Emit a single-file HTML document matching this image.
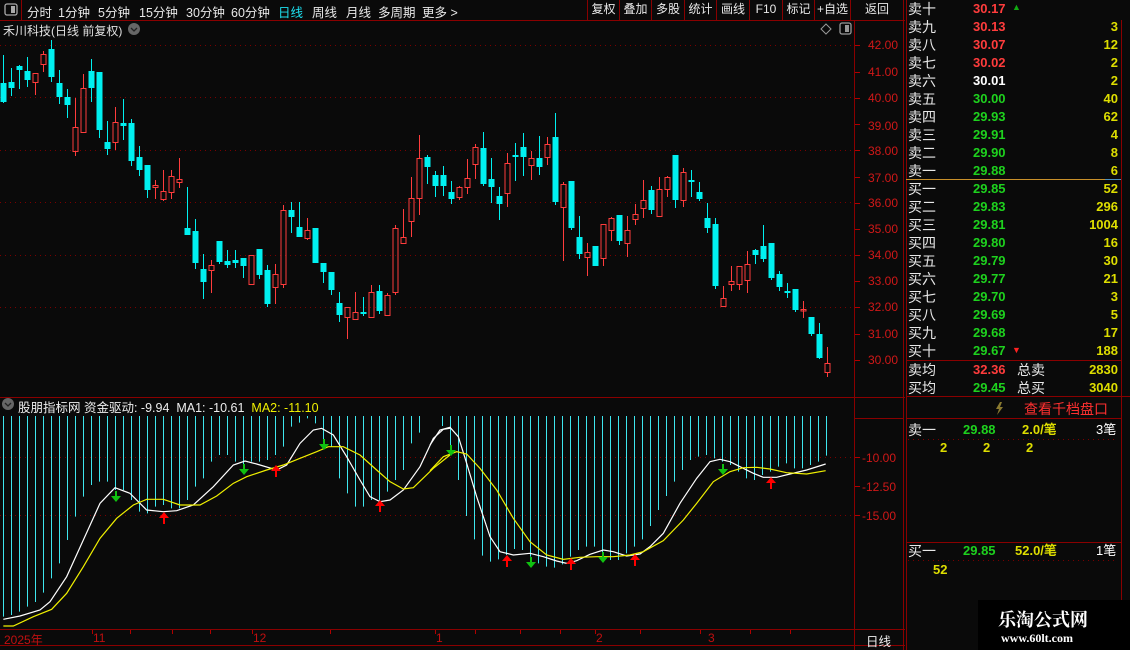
<!DOCTYPE html>
<html><head><meta charset="utf-8"><style>
*{margin:0;padding:0;box-sizing:border-box}
body{width:1130px;height:650px;background:#0a0a0a;overflow:hidden;position:relative;font-family:"Liberation Sans","Noto Sans CJK SC",sans-serif;color:#ddd}
.a{position:absolute;white-space:nowrap}
.tb{font-size:12.5px;top:2px;color:#e8e8e8}
.btn{position:absolute;top:0;height:20px;border-left:1px solid #800;font-size:12px;color:#e8e8e8;text-align:center;line-height:19px;white-space:nowrap;overflow:hidden}
.r{font-size:14px;line-height:18px}
.lab{left:908px;color:#e8e8e8}
.pr{left:973px;font-weight:bold;font-size:13px}
.nm{right:12px;font-weight:bold;font-size:13px;color:#dede00;text-align:right}
.red{color:#ff3c3c}.grn{color:#1ed21e}.yel{color:#dede00}.wht{color:#fff}
.ax{left:868px;font-size:12px;color:#d01818}
</style></head><body>
<svg id="sv" class="a" style="left:0;top:0" width="1130" height="650">
<g stroke="#8a0000" fill="none">
<line x1="0" y1="20.5" x2="905" y2="20.5"/>
<line x1="854.5" y1="20" x2="854.5" y2="650"/>
<line x1="903.5" y1="0" x2="903.5" y2="650"/>
<line x1="906.5" y1="0" x2="906.5" y2="650"/>
<line x1="1121.5" y1="20" x2="1121.5" y2="650"/>
<line x1="0" y1="397.5" x2="905" y2="397.5"/>
<line x1="0" y1="629.5" x2="905" y2="629.5"/>
<line x1="0" y1="645.5" x2="905" y2="645.5"/>
<line x1="21.5" y1="0" x2="21.5" y2="20"/>
<line x1="906" y1="360.5" x2="1121" y2="360.5"/>
<line x1="906" y1="396.5" x2="1130" y2="396.5"/>
<line x1="906" y1="418.5" x2="1121" y2="418.5"/>
<line x1="906" y1="542.5" x2="1121" y2="542.5"/>
<line x1="855" y1="418.5" x2="903" y2="418.5"/>
</g>
<line x1="906" y1="179.5" x2="1121" y2="179.5" stroke="#c8902a"/>
<line x1="1105" y1="179.5" x2="1121" y2="179.5" stroke="#4a90c0"/>
<g stroke="#7a0000" stroke-dasharray="1,4">
<line x1="0" y1="45.5" x2="854" y2="45.5"/><line x1="0" y1="97.5" x2="854" y2="97.5"/>
<line x1="0" y1="150.5" x2="854" y2="150.5"/><line x1="0" y1="202.5" x2="854" y2="202.5"/>
<line x1="0" y1="255.5" x2="854" y2="255.5"/><line x1="0" y1="307.5" x2="854" y2="307.5"/>
<line x1="0" y1="457.5" x2="854" y2="457.5"/><line x1="0" y1="515.5" x2="854" y2="515.5"/>
<line x1="908" y1="439.5" x2="1118" y2="439.5"/><line x1="908" y1="560.5" x2="1118" y2="560.5"/>
</g>
<g id="cd"></g><g id="bars" stroke="#3ee6ee" stroke-width="1"></g>
<g id="ticks" stroke="#b00000"></g>
<polyline id="wl" fill="none" stroke="#fff" stroke-width="1.2"/>
<polyline id="yl" fill="none" stroke="#f0f000" stroke-width="1.2"/>
<polyline id="wl2" fill="none" stroke="#fff" stroke-width="1.2"/>
<polyline id="yl2" fill="none" stroke="#f0f000" stroke-width="1.2"/>
<g id="arr"></g>
<rect x="5" y="4" width="12" height="11" rx="2" fill="none" stroke="#aaa" stroke-width="1.3"/><rect x="11" y="6" width="4" height="7" fill="#aaa"/>
<rect x="840" y="23" width="11" height="11" rx="2" fill="none" stroke="#999" stroke-width="1.3"/><rect x="845" y="25" width="4" height="7" fill="#999"/>
<path d="M826 24 L831 29 L826 34 L821 29Z" fill="none" stroke="#999"/>
<circle cx="134" cy="29" r="6" fill="#666"/><path d="M131 28 l3 3 l3 -3" stroke="#222" fill="none" stroke-width="1.3"/>
<circle cx="8" cy="404" r="6" fill="#666"/><path d="M5 403 l3 3 l3 -3" stroke="#222" fill="none" stroke-width="1.3"/>
<path d="M1000 402 l-4 7 h3 l-2 6 l6 -8 h-3 l2 -5z" fill="#8a7a30"/>
<rect x="978" y="600" width="152" height="50" fill="#000"/>
</svg>

<div class="a tb" style="left:27px">分时</div>
<div class="a tb" style="left:58px">1分钟</div>
<div class="a tb" style="left:98px">5分钟</div>
<div class="a tb" style="left:139px">15分钟</div>
<div class="a tb" style="left:186px">30分钟</div>
<div class="a tb" style="left:231px">60分钟</div>
<div class="a tb" style="left:278px;color:#1de0f0">日线</div>
<div class="a tb" style="left:312px">周线</div>
<div class="a tb" style="left:346px">月线</div>
<div class="a tb" style="left:378px">多周期</div>
<div class="a tb" style="left:422px">更多 &gt;</div>
<div class="btn" style="left:587px;width:32px">复权</div>
<div class="btn" style="left:619px;width:32px">叠加</div>
<div class="btn" style="left:651px;width:33px">多股</div>
<div class="btn" style="left:684px;width:32px">统计</div>
<div class="btn" style="left:716px;width:33px">画线</div>
<div class="btn" style="left:749px;width:33px">F10</div>
<div class="btn" style="left:782px;width:32px">标记</div>
<div class="btn" style="left:814px;width:36px">+自选</div>
<div class="btn" style="left:850px;width:54px;border-right:1px solid #800">返回</div>

<div class="a" style="left:3px;top:22px;font-size:12px;color:#e0e0e0">禾川科技(日线 前复权)</div>
<div class="a" style="left:18px;top:397px;font-size:12.5px;color:#eee">股朋指标网 资金驱动: -9.94 &nbsp;MA1: -10.61 &nbsp;<span style="color:#f0f000">MA2: -11.10</span></div>

<div class="a ax" style="top:38px">42.00</div><div class="a ax" style="top:65px">41.00</div>
<div class="a ax" style="top:91px">40.00</div><div class="a ax" style="top:119px">39.00</div>
<div class="a ax" style="top:144px">38.00</div><div class="a ax" style="top:171px">37.00</div>
<div class="a ax" style="top:196px">36.00</div><div class="a ax" style="top:222px">35.00</div>
<div class="a ax" style="top:248px">34.00</div><div class="a ax" style="top:274px">33.00</div>
<div class="a ax" style="top:300px">32.00</div><div class="a ax" style="top:327px">31.00</div>
<div class="a ax" style="top:353px">30.00</div>
<div class="a ax" style="top:451px;left:862px">-10.00</div>
<div class="a ax" style="top:480px;left:862px">-12.50</div>
<div class="a ax" style="top:509px;left:862px">-15.00</div>
<div class="a" style="left:866px;top:631px;font-size:12.5px;color:#eee">日线</div>

<div class="a" style="left:4px;top:631px;font-size:12px;color:#c01010">2025年</div>
<div class="a" style="left:93px;top:631px;font-size:12px;color:#c01010">11</div>
<div class="a" style="left:253px;top:631px;font-size:12px;color:#c01010">12</div>
<div class="a" style="left:436px;top:631px;font-size:12px;color:#c01010">1</div>
<div class="a" style="left:596px;top:631px;font-size:12px;color:#c01010">2</div>
<div class="a" style="left:708px;top:631px;font-size:12px;color:#c01010">3</div>

<div id="ob"></div>
<div class="a r lab" style="top:361px">卖均</div><div class="a r pr red" style="top:361px">32.36</div><div class="a r lab" style="top:361px;left:1017px">总卖</div><div class="a r nm" style="top:361px">2830</div>
<div class="a r lab" style="top:379px">买均</div><div class="a r pr grn" style="top:379px">29.45</div><div class="a r lab" style="top:379px;left:1017px">总买</div><div class="a r nm" style="top:379px">3040</div>
<div class="a" style="left:1024px;top:399px;font-size:14px;color:#ff3030">查看千档盘口</div>
<div class="a r lab" style="top:421px">卖一</div><div class="a r grn" style="top:421px;left:963px;font-weight:bold;font-size:13px">29.88</div><div class="a r yel" style="top:421px;left:1022px;font-weight:bold;font-size:13px">2.0/笔</div><div class="a r wht" style="top:421px;left:1096px;font-size:13px">3笔</div>
<div class="a yel" style="top:440px;left:940px;font-size:13px;font-weight:bold">2</div><div class="a yel" style="top:440px;left:983px;font-size:13px;font-weight:bold">2</div><div class="a yel" style="top:440px;left:1026px;font-size:13px;font-weight:bold">2</div>
<div class="a r lab" style="top:542px">买一</div><div class="a r grn" style="top:542px;left:963px;font-weight:bold;font-size:13px">29.85</div><div class="a r yel" style="top:542px;left:1015px;font-weight:bold;font-size:13px">52.0/笔</div><div class="a r wht" style="top:542px;left:1096px;font-size:13px">1笔</div>
<div class="a yel" style="top:562px;left:933px;font-size:13px;font-weight:bold">52</div>
<div class="a" style="left:998px;top:606px;font-size:18px;font-weight:bold;color:#fff;font-family:'Liberation Serif','Noto Serif CJK SC',serif">乐淘公式网</div>
<div class="a" style="left:1001px;top:631px;font-size:12px;font-weight:bold;color:#fff;font-family:'Liberation Serif',serif">www.60lt.com</div>

<script>
var ob=[["卖十","30.17","red",""],["卖九","30.13","red","3"],["卖八","30.07","red","12"],["卖七","30.02","red","2"],["卖六","30.01","wht","2"],["卖五","30.00","grn","40"],["卖四","29.93","grn","62"],["卖三","29.91","grn","4"],["卖二","29.90","grn","8"],["卖一","29.88","grn","6"],
["买一","29.85","grn","52"],["买二","29.83","grn","296"],["买三","29.81","grn","1004"],["买四","29.80","grn","16"],["买五","29.79","grn","30"],["买六","29.77","grn","21"],["买七","29.70","grn","3"],["买八","29.69","grn","5"],["买九","29.68","grn","17"],["买十","29.67","grn","188"]];
var h="";ob.forEach(function(r,i){var t=i*18;h+='<div class="a r lab" style="top:'+t+'px">'+r[0]+'</div><div class="a r pr '+r[2]+'" style="top:'+t+'px">'+r[1]+'</div><div class="a r nm" style="top:'+t+'px">'+r[3]+'</div>';});
h+='<div class="a" style="left:1012px;top:2px;font-size:9px;color:#1a1">▲</div><div class="a" style="left:1012px;top:345px;font-size:9px;color:#f22">▼</div>';
document.getElementById("ob").innerHTML=h;
var C="1,83,102,55,103;1,82,88,68,96;1,66,70,65,89;1,71,80,57,87;0,73,82,73,95;0,54,64,51,72;1,49,77,40,82;1,83,97,70,104;1,97,105,89,118;0,127,151,98,156;0,88,132,74,132;1,71,88,59,102;1,72,130,72,138;1,142,149,121,155;0,122,142,107,150;1,123,126,99,140;1,123,161,119,166;1,157,170,146,176;1,165,190,165,198;0,185,187,180,199;0,191,199,170,201;0,176,192,170,199;0,179,182,158,188;1,228,235,187,235;1,231,263,219,269;1,269,282,254,299;0,265,270,260,293;1,241,262,241,264;1,261,265,250,268;1,260,263,250,268;1,258,266,258,278;0,255,284,255,284;1,249,275,249,279;1,270,304,265,307;0,274,287,264,304;0,210,284,205,288;1,210,217,202,233;1,227,237,202,237;0,230,238,218,240;1,228,263,228,263;1,263,272,263,283;1,272,290,272,295;1,303,315,292,322;0,307,317,307,339;0,312,319,292,319;1,312,314,297,316;0,292,317,285,317;1,291,311,285,314;0,295,315,293,315;0,228,292,225,295;0,237,243,209,244;0,198,221,177,237;0,158,198,135,215;1,157,167,155,184;1,175,186,171,197;1,175,186,166,196;1,192,199,181,204;0,187,197,186,200;0,178,187,159,194;0,147,164,144,179;1,148,184,132,186;1,179,187,158,203;1,196,204,187,220;0,163,193,153,207;1,155,157,143,181;1,147,157,133,176;0,158,165,151,180;1,158,167,136,175;0,144,157,137,165;1,137,202,113,205;0,184,207,182,261;1,181,228,181,230;1,237,254,216,259;0,252,257,243,276;1,246,266,246,266;0,224,258,224,266;0,218,230,217,241;1,215,241,215,245;0,230,243,216,257;0,214,219,204,225;0,200,208,180,218;1,190,210,186,214;0,189,216,177,216;0,177,189,176,197;1,155,200,155,208;0,172,200,168,207;1,180,182,170,197;1,192,199,182,201;1,218,228,203,233;1,224,286,218,289;0,298,306,286,306;0,281,284,266,291;0,266,284,266,290;0,264,280,251,293;1,250,255,249,264;1,246,259,225,262;1,243,278,243,280;1,274,287,271,291;1,291,292,283,298;1,289,310,289,312;0,309,310,301,318;1,317,334,317,336;1,334,358,323,359;0,363,372,347,377".split(";");
var s="";C.forEach(function(v,i){var a=v.split(",").map(Number),x=3.5+8*i;
if(a[0]){s+='<line x1="'+x+'" y1="'+a[3]+'" x2="'+x+'" y2="'+a[4]+'" stroke="#00f0f0"/><rect x="'+(x-3)+'" y="'+a[1]+'" width="6" height="'+Math.max(2,a[2]-a[1])+'" fill="#00f0f0"/>';}
else{s+='<line x1="'+x+'" y1="'+a[3]+'" x2="'+x+'" y2="'+a[1]+'" stroke="#ff3c3c"/><line x1="'+x+'" y1="'+a[2]+'" x2="'+x+'" y2="'+a[4]+'" stroke="#ff3c3c"/><rect x="'+(x-2.5)+'" y="'+(a[1]+.5)+'" width="5" height="'+Math.max(1.5,a[2]-a[1])+'" fill="none" stroke="#ff3c3c"/>';}});
document.getElementById("cd").innerHTML=s;
var L=[680,675,665,650,636,608,565,520,450,380,320,285,275,275,300,300,330,365,370,350,345,355,355,330,290,265,215,195,195,215,245,215,215,210,195,170,110,98,85,100,175,170,265,310,350,350,330,350,305,270,240,160,128,0,0];
var b="";L.forEach(function(z,i){if(!z)return;var x=3.5+8*i;b+='<line x1="'+x+'" y1="416" x2="'+x+'" y2="'+(390+z/3)+'"/>';});
var R=[78,135,240,348,418,467,485,478,465,447,450,470,490,500,503,493,470,450,440,440,460,480,480,460,440,418,378,330,288,245,210,180,170,165,175,185,195,215,235,240,225,215,200,190,205,205,195,185,167];
R.forEach(function(z,i){var x=442.5+8*i;b+='<line x1="'+x+'" y1="416" x2="'+x+'" y2="'+(400+z/3)+'"/>';});
b+='<line x1="307.5" y1="416" x2="307.5" y2="418"/><line x1="315.5" y1="416" x2="315.5" y2="422"/>';
document.getElementById("bars").innerHTML=b;
function P(id,arr,ox,oy){document.getElementById(id).setAttribute("points",arr.map(function(p){return (p[0]/3+ox)+","+(p[1]/3+oy)}).join(" "));}
P("wl",[[10,688],[60,678],[120,660],[150,635],[200,560],[250,450],[300,340],[345,293],[390,310],[440,360],[490,365],[530,362],[580,345],[640,290],[700,225],[735,213],[770,222],[830,240],[860,225],[900,160],[940,120],[965,115],[1000,135],[1040,200],[1080,270],[1110,320],[1140,335],[1170,330],[1210,300],[1260,230],[1300,145],[1330,118],[1350,115]],0,390);
P("yl",[[10,708],[40,708],[100,680],[155,658],[200,610],[250,530],[300,445],[350,385],[400,345],[440,328],[490,328],[540,345],[600,345],[650,318],[700,280],[740,260],[800,240],[850,225],[900,205],[950,185],[985,170],[1030,170],[1080,195],[1130,240],[1170,275],[1210,297],[1240,293],[1300,235],[1350,195]],0,390);
P("wl2",[[0,135],[30,90],[60,82],[85,110],[110,190],[140,290],[180,410],[210,455],[250,465],[300,460],[340,470],[380,483],[410,490],[440,482],[480,463],[520,450],[550,455],[590,468],[630,462],[660,440],[700,400],[750,310],[800,235],[840,185],[870,178],[900,185],[930,200],[970,220],[1000,232],[1040,232],[1080,222],[1130,210],[1187,192]],430,400);
P("yl2",[[0,212],[40,170],[80,155],[110,162],[150,205],[200,270],[250,355],[300,425],[350,465],[400,478],[450,472],[500,470],[550,470],[600,465],[640,455],[700,422],[760,360],[800,310],[850,245],[900,215],[940,203],[980,202],[1020,207],[1070,218],[1130,222],[1187,212]],430,400);
var A="";
[[116,500],[244,473],[324,448],[451,454],[531,566],[603,561],[723,473]].forEach(function(p){var x=p[0],y=p[1];A+='<rect x="'+(x-1)+'" y="'+(y-9)+'" width="2" height="6" fill="#10c010"/><path d="M'+(x-5)+' '+(y-4)+' h10 l-5 6z" fill="#10c010"/>';});
[[164,517],[276,470],[380,505],[507,560],[571,563],[635,559],[771,482]].forEach(function(p){var x=p[0],y=p[1];A+='<path d="M'+(x-5)+' '+(y+1)+' h10 l-5 -6z" fill="#f00"/><rect x="'+(x-1)+'" y="'+(y+1)+'" width="2" height="6" fill="#f00"/>';});
document.getElementById("arr").innerHTML=A;
var T="";[45,72,98,124,150,177,203,229,255,281,307,334,360,457,486,515].forEach(function(y){T+='<line x1="855" y1="'+(y+.5)+'" x2="860" y2="'+(y+.5)+'"/>';});
[92,130,172,210,252,330,435,475,520,560,595,640,700,750,790].forEach(function(x){T+='<line x1="'+(x+.5)+'" y1="630" x2="'+(x+.5)+'" y2="634"/>';});
document.getElementById("ticks").innerHTML=T;
</script>
</body></html>
